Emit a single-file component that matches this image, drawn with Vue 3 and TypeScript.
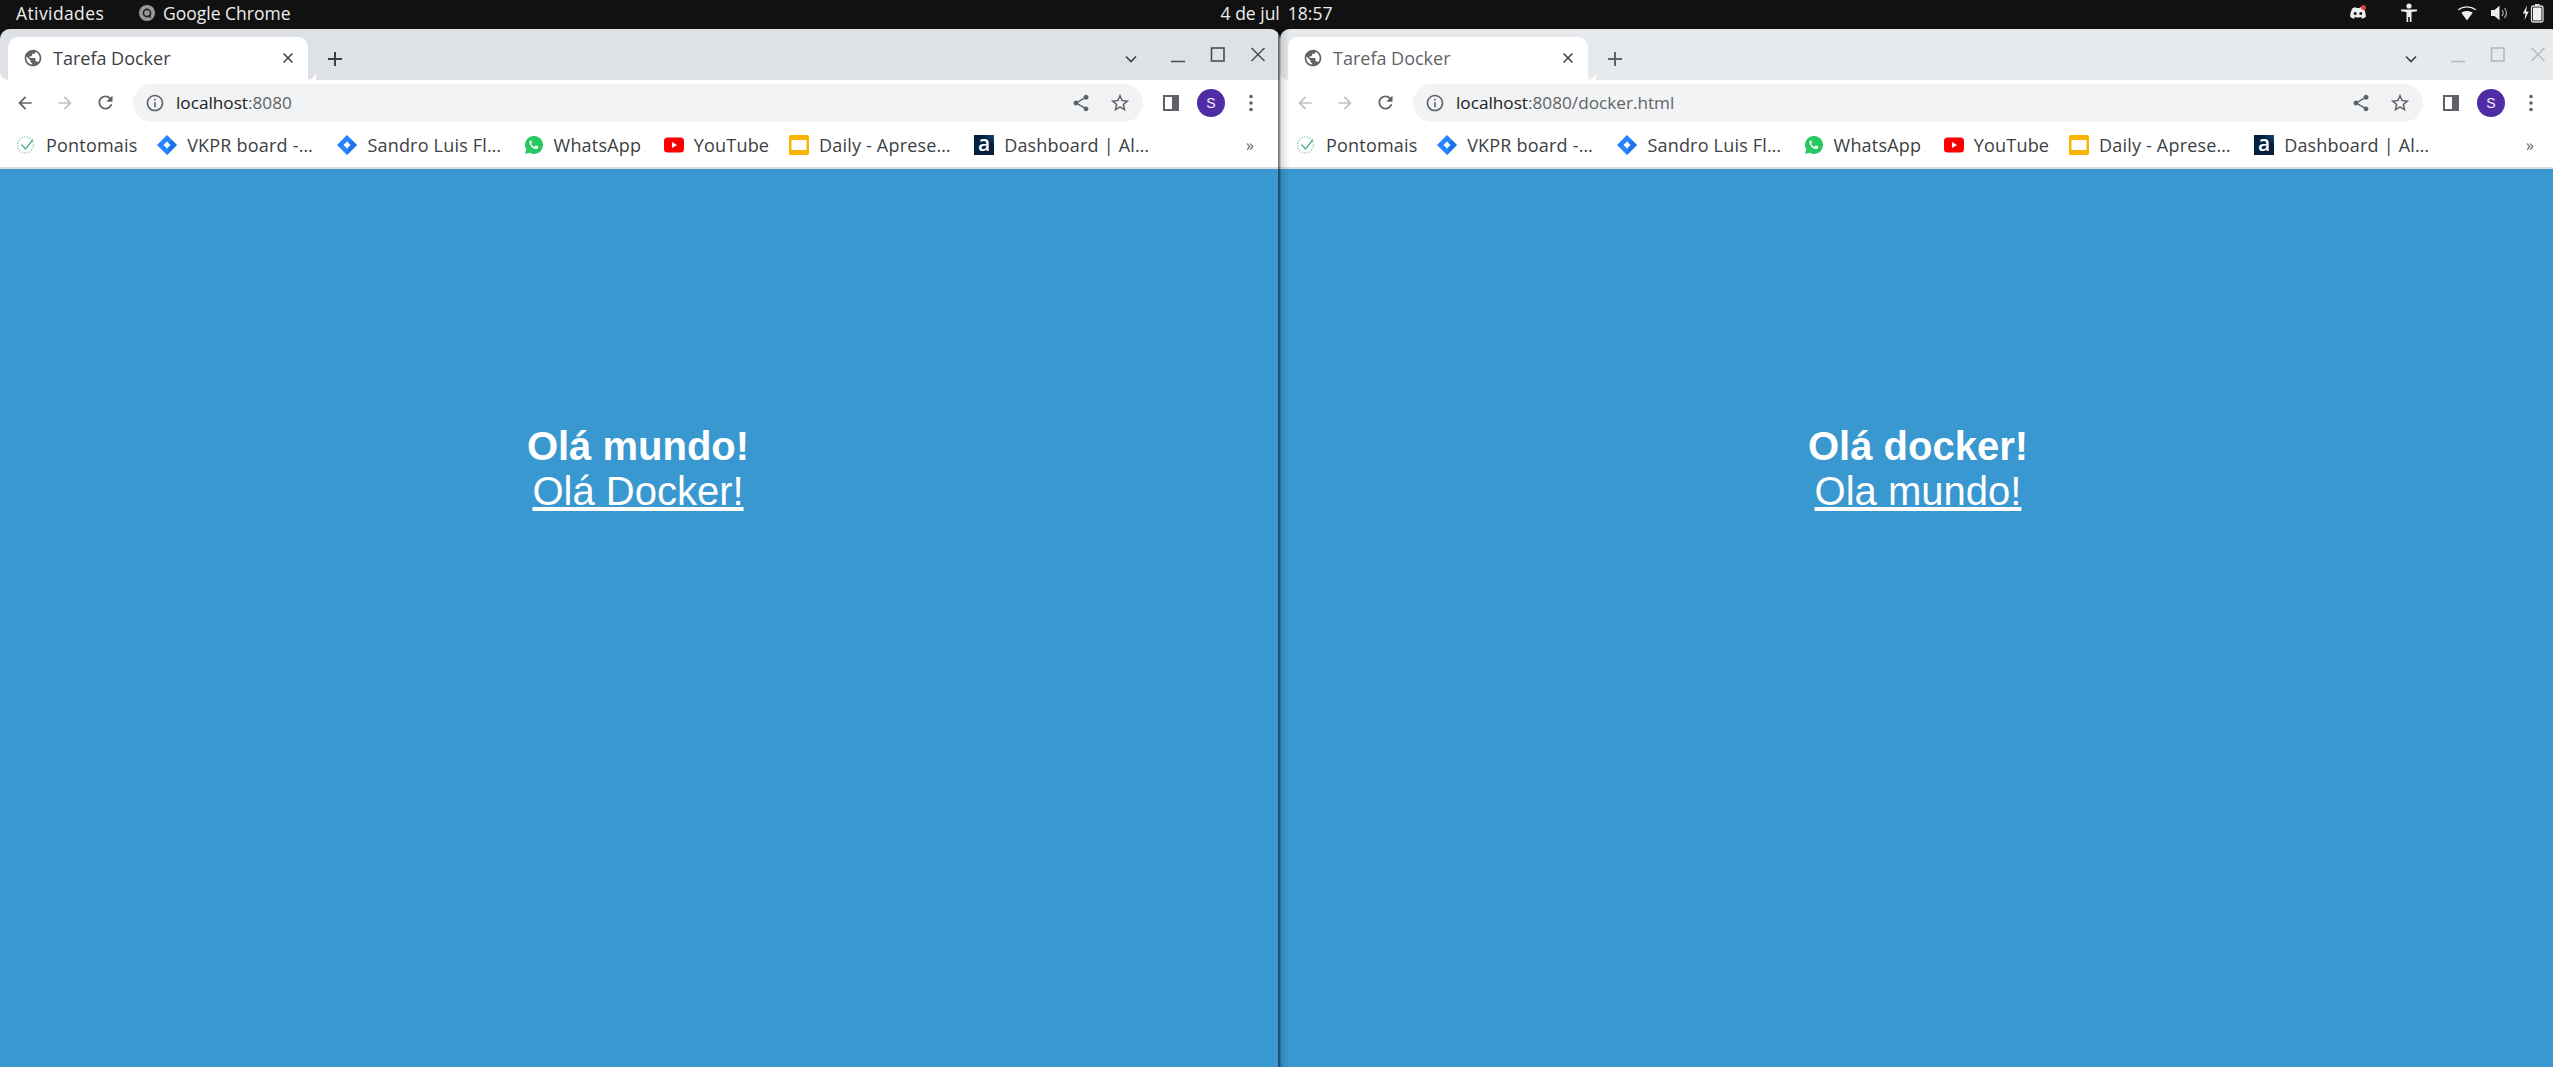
<script setup lang="ts">
interface Bookmark { id: string; label: string; width: number }
interface Win {
  id: string; focused: boolean; host: string; path: string;
  heading: string; link: string;
}
const bookmarks: Bookmark[] = [
  { id: 'ponto', label: 'Pontomais', width: 90 },
  { id: 'jira', label: 'VKPR board -…', width: 129 },
  { id: 'jira', label: 'Sandro Luis Fl…', width: 135 },
  { id: 'whats', label: 'WhatsApp', width: 89 },
  { id: 'yt', label: 'YouTube', width: 74 },
  { id: 'daily', label: 'Daily - Aprese…', width: 134 },
  { id: 'alura', label: 'Dashboard | Al…', width: 141 },
];
const windows: Win[] = [
  { id: 'a', focused: true, host: 'localhost', path: ':8080', heading: 'Olá mundo!', link: 'Olá Docker!' },
  { id: 'b', focused: false, host: 'localhost', path: ':8080/docker.html', heading: 'Olá docker!', link: 'Ola mundo!' },
];
</script>

<template>
  <div class="screen">
    <header class="topbar">
      <div class="top-left">
        <span class="top-text activities">Atividades</span>
        <svg class="chrome-mark" viewBox="0 0 16 16" width="16" height="16">
          <circle cx="8" cy="8" r="8" fill="#9a9a9a" />
          <circle cx="8" cy="8" r="3.6" fill="none" stroke="#222" stroke-width="1.6" />
          <path d="M11 9v4" stroke="#222" stroke-width="1.4" />
        </svg>
        <span class="top-text">Google Chrome</span>
      </div>
      <div class="top-text clock"><span>4 de jul</span><span>18:57</span></div>
      <div class="tray">
        <svg class="tray-discord" viewBox="0 0 20 16" width="20" height="16">
          <path fill="#eee" d="M4.500 3.200C6 2.500 7.400 2.300 8 2.300l.4.8h3.200l.4-.8c.6 0 2 .2 3.500.9 1.600 2.600 2.400 5.500 2.300 8.800-1.200.9-2.600 1.500-3.800 1.700l-.9-1.400c.6-.2 1.100-.5 1.500-.8-2.900 1.300-6.300 1.300-9.200 0 .4.3.9.6 1.500.8l-.9 1.400C4.800 13.500 3.400 12.900 2.200 12c-.1-3.300.7-6.200 2.300-8.800z" />
          <circle cx="7.200" cy="8.500" r="1.500" fill="#111" />
          <circle cx="12.800" cy="8.500" r="1.500" fill="#111" />
          <circle cx="15.500" cy="2.500" r="2.500" fill="#e8403a" />
        </svg>
        <svg class="tray-access" viewBox="0 0 18 20" width="18" height="20">
          <circle cx="9" cy="3" r="2.600" fill="#eee" />
          <path fill="#eee" d="M1 6.500h16v1.800l-5.500.8V19H9.800v-5H8.200v5H6.500V9.100L1 8.300z" />
        </svg>
        <svg class="tray-wifi" viewBox="0 0 20 16" width="20" height="16">
          <path fill="#eee" d="M10 15.500 4.300 7.800C7.600 5.500 12.400 5.500 15.700 7.800z" />
          <path fill="none" stroke="#eee" stroke-width="1.300" d="M1.200 4.700C6.300.9 13.700.9 18.800 4.700" />
        </svg>
        <svg class="tray-vol" viewBox="0 0 18 16" width="18" height="16">
          <path fill="#eee" d="M1 5h3.500L9.500 .8v14.400L4.500 11H1z" />
          <path fill="none" stroke="#aaa" stroke-width="1.200" d="M12 5c1.300 1.700 1.300 4.300 0 6M14.500 3c2.300 3 2.300 7 0 10" />
        </svg>
        <svg class="tray-bat" viewBox="0 0 22 20" width="22" height="20">
          <path fill="#eee" d="M5 2.500 .8 10.500h2.700L2.500 17l4.300-8.500H4.100z" />
          <rect x="9.500" y="3" width="11.500" height="16" rx="2" fill="none" stroke="#ddd" stroke-width="1.300" />
          <rect x="13" y="1" width="4.500" height="2" fill="#ddd" />
          <rect x="11" y="4.500" width="8.500" height="13" rx=".8" fill="#eee" />
        </svg>
      </div>
    </header>

    <main class="desktop">
      <div v-for="w in windows" :key="w.id" class="slot" :class="{ front: w.focused }">
        <section class="window" :class="w.focused ? 'focused' : 'blurred'">
          <div class="tabstrip">
            <div class="tab">
              <svg class="globe" viewBox="0 0 24 24" width="20" height="20">
                <path fill="#5f6368" d="M12 2C6.480 2 2 6.480 2 12s4.480 10 10 10 10-4.480 10-10S17.520 2 12 2zm-1 17.930c-3.950-.490-7-3.850-7-7.930 0-.620.080-1.210.210-1.790L9 15v1c0 1.100.900 2 2 2v1.930zm6.900-2.540c-.260-.810-1-1.390-1.900-1.390h-1v-3c0-.550-.450-1-1-1H8v-2h2c.550 0 1-.450 1-1V7h2c1.100 0 2-.900 2-2v-.410c2.930 1.190 5 4.060 5 7.410 0 2.080-.800 3.970-2.100 5.390z" />
              </svg>
              <span class="tab-title">Tarefa Docker</span>
              <svg class="tab-close" viewBox="0 0 12 12" width="12" height="12">
                <path d="M1.500 1.500l9 9M10.500 1.500l-9 9" stroke="#3c4043" stroke-width="1.500" fill="none" />
              </svg>
            </div>
            <svg class="new-tab" viewBox="0 0 14 14" width="14" height="14">
              <path class="strip-ink" d="M7 0v14M0 7h14" stroke-width="2" fill="none" />
            </svg>
            <svg class="tab-search" viewBox="0 0 12 8" width="12" height="8">
              <path d="M1 1.500l5 5 5-5" stroke="#3c4043" stroke-width="1.600" fill="none" />
            </svg>
            <div class="win-ctrl">
              <svg viewBox="0 0 16 16" width="16" height="16">
                <path class="ctrl-ink" d="M1 14.500h14" stroke-width="1.500" fill="none" />
              </svg>
              <svg viewBox="0 0 16 16" width="16" height="16">
                <rect class="ctrl-ink" x="1.500" y="1" width="12.500" height="13" stroke-width="1.600" fill="none" />
              </svg>
              <svg viewBox="0 0 16 16" width="16" height="16">
                <path class="ctrl-ink" d="M1.500 1l13 13M14.500 1l-13 13" stroke-width="1.500" fill="none" />
              </svg>
            </div>
          </div>

          <div class="toolbar">
            <button class="tool" type="button">
              <svg viewBox="0 0 24 24" width="20" height="20">
                <path class="back-ink" d="M20 11H7.830l5.590-5.590L12 4l-8 8 8 8 1.410-1.410L7.830 13H20v-2z" />
              </svg>
            </button>
            <button class="tool" type="button">
              <svg viewBox="0 0 24 24" width="20" height="20">
                <path fill="#bdc1c6" d="M4 11h12.170l-5.590-5.590L12 4l8 8-8 8-1.410-1.410L16.170 13H4v-2z" />
              </svg>
            </button>
            <button class="tool" type="button">
              <svg viewBox="0 0 24 24" width="21" height="21">
                <path fill="#5f6368" d="M17.650 6.350C16.200 4.900 14.210 4 12 4c-4.420 0-7.990 3.580-7.990 8s3.570 8 7.990 8c3.730 0 6.840-2.550 7.730-6h-2.080c-.820 2.330-3.040 4-5.650 4-3.310 0-6-2.690-6-6s2.690-6 6-6c1.660 0 3.140.690 4.220 1.780L13 11h7V4l-2.350 2.350z" />
              </svg>
            </button>
            <div class="omnibox">
              <svg class="info" viewBox="0 0 24 24" width="20" height="20">
                <path fill="#5f6368" d="M11 7h2v2h-2zm0 4h2v6h-2zm1-9C6.480 2 2 6.480 2 12s4.480 10 10 10 10-4.480 10-10S17.520 2 12 2zm0 18c-4.410 0-8-3.590-8-8s3.590-8 8-8 8 3.590 8 8-3.590 8-8 8z" />
              </svg>
              <span class="url"><span class="host">{{ w.host }}</span><span class="path">{{ w.path }}</span></span>
              <svg class="omni-icon share" viewBox="0 0 24 24" width="20" height="20">
                <path fill="#5f6368" d="M18 16.080c-.760 0-1.440.300-1.960.770L8.910 12.700c.050-.230.090-.460.090-.700s-.040-.470-.090-.700l7.050-4.110c.540.500 1.250.810 2.040.810 1.660 0 3-1.340 3-3s-1.340-3-3-3-3 1.340-3 3c0 .240.040.470.090.700L8.040 9.810C7.500 9.310 6.790 9 6 9c-1.660 0-3 1.340-3 3s1.340 3 3 3c.790 0 1.500-.310 2.040-.810l7.120 4.160c-.050.210-.080.430-.080.650 0 1.610 1.310 2.920 2.920 2.920s2.920-1.310 2.920-2.920-1.310-2.920-2.920-2.920z" />
              </svg>
              <svg class="omni-icon" viewBox="0 0 24 24" width="22" height="22">
                <path fill="#5f6368" d="M22 9.240l-7.190-.620L12 2 9.190 8.630 2 9.240l5.460 4.730L5.820 21 12 17.270 18.180 21l-1.630-7.030L22 9.240zM12 15.400l-3.760 2.270 1-4.280-3.320-2.880 4.380-.380L12 6.100l1.710 4.040 4.380.380-3.320 2.880 1 4.280L12 15.400z" />
              </svg>
            </div>
            <div class="tools-right">
              <button class="tool" type="button">
                <svg viewBox="0 0 18 18" width="18" height="18">
                  <rect x="1" y="1" width="16" height="16" fill="#5f6368" />
                  <rect x="3" y="3" width="7" height="12" fill="#fff" />
                </svg>
              </button>
              <button class="tool" type="button">
                <span class="avatar">S</span>
              </button>
              <button class="tool" type="button">
                <svg viewBox="0 0 4 18" width="4" height="18">
                  <circle cx="2" cy="2.500" r="1.800" fill="#5f6368" />
                  <circle cx="2" cy="9" r="1.800" fill="#5f6368" />
                  <circle cx="2" cy="15.500" r="1.800" fill="#5f6368" />
                </svg>
              </button>
            </div>
          </div>

          <nav class="bookmarks">
            <a v-for="b in bookmarks" :key="b.label" class="mark">
              <svg v-if="b.id === 'ponto'" viewBox="0 0 20 20" width="20" height="20">
                <circle cx="9.500" cy="10" r="8" fill="none" stroke="#6fb9a0" stroke-width="1.200" stroke-dasharray="1 1.600" />
                <path d="M5.500 9.500l4 4.500L17 4.500" fill="none" stroke="#5fbf94" stroke-width="1.600" />
              </svg>
              <svg v-else-if="b.id === 'jira'" viewBox="0 0 20 20" width="20" height="20">
                <path fill="#2684ff" d="M10 0l10 10-10 10L0 10z" />
                <path fill="#1565d8" d="M10 20l10-10-5-5-5 5 2.500 2.500z" opacity=".55" />
                <path fill="#fff" d="M10 6.500l3.500 3.500-3.500 3.500L6.500 10z" />
              </svg>
              <svg v-else-if="b.id === 'whats'" viewBox="0 0 20 20" width="20" height="20">
                <path fill="#25c95f" d="M10 1a9 9 0 0 0-7.700 13.600L1 19l4.500-1.200A9 9 0 1 0 10 1z" />
                <path fill="#fff" d="M7.200 5.300c-.4 0-1 .2-1.400.9-.6 1-.5 2.300.4 3.800 1.200 2 2.800 3.300 4.800 3.900 1.300.4 2.400 0 3-.8.300-.5.400-1.100.300-1.500l-2.200-1.100c-.2-.1-.4 0-.5.100l-.8 1c-.2.200-.3.200-.5.100-1.400-.6-2.400-1.500-3.100-2.800-.1-.2-.1-.300.1-.5l.6-.8c.1-.1.100-.3 0-.5l-.9-2c-.1-.2-.3-.2-.8-.2z" />
              </svg>
              <svg v-else-if="b.id === 'yt'" viewBox="0 0 20 20" width="20" height="20">
                <rect x="0" y="2.500" width="20" height="15" rx="3.500" fill="#f00" />
                <path fill="#fff" d="M8 7l5 3-5 3z" />
              </svg>
              <svg v-else-if="b.id === 'daily'" viewBox="0 0 20 20" width="20" height="20">
                <rect x="0" y="0" width="20" height="20" rx="1.500" fill="#f9b400" />
                <rect x="2.500" y="5" width="15" height="10" fill="#fff" />
              </svg>
              <span v-else class="alura">a</span>
              <span class="mark-text" :style="{ width: b.width + 'px' }">{{ b.label }}</span>
            </a>
            <span class="more">»</span>
          </nav>

          <article class="page">
            <strong class="heading">{{ w.heading }}</strong>
            <a class="page-link" href="#">{{ w.link }}</a>
          </article>
        </section>
      </div>
    </main>
  </div>
</template>

<style scoped>
.screen {
  width: 2553px;
  height: 1067px;
  overflow: hidden;
  background: #111;
  display: flex;
  flex-direction: column;
  font-family: "Open Sans", "Noto Sans", sans-serif;
}
.topbar {
  height: 29px;
  flex: none;
  box-sizing: border-box;
  padding-bottom: 3px;
  display: grid;
  grid-template-columns: 1fr auto 1fr;
  align-items: center;
  background: #111;
  color: #eee;
}
.top-left { display: flex; align-items: center; padding-left: 16px; }
.top-text { font-size: 17.5px; color: #eee; white-space: nowrap; }
.activities { width: 123px; flex: none; letter-spacing: .4px; }
.chrome-mark { margin-right: 8px; }
.clock { display: flex; gap: 8px; }
.tray {
  display: flex;
  justify-content: flex-end;
  align-items: center;
  padding-right: 9px;
}
.tray-access { margin-left: 32px; }
.tray-wifi { margin-left: 39px; }
.tray-vol { margin-left: 13px; }
.tray-bat { margin-left: 14px; }

.desktop {
  flex: 1;
  display: grid;
  grid-template-columns: 1280px 1fr;
  min-height: 0;
}
.slot { position: relative; min-width: 0; }
.slot.front { z-index: 2; }
.slot.front::after {
  content: "";
  position: absolute;
  top: 0;
  bottom: 0;
  left: 1278px;
  width: 12px;
  background: linear-gradient(90deg, rgba(0, 0, 0, .55) 0, rgba(0, 0, 0, .4) 2px, rgba(0, 0, 0, .12) 3px, rgba(0, 0, 0, 0) 100%);
  pointer-events: none;
}
.window {
  width: 1280px;
  height: 100%;
  display: flex;
  flex-direction: column;
  border-radius: 10px 10px 0 0;
  overflow: hidden;
  background: #3998cf;
}

.tabstrip {
  height: 51px;
  flex: none;
  display: flex;
  align-items: flex-end;
  padding-left: 8px;
  position: relative;
}
.focused .tabstrip { background: #dee1e6; }
.blurred .tabstrip { background: #e7eaed; }
.tab {
  width: 300px;
  height: 43px;
  background: #fff;
  border-radius: 10px 10px 0 0;
  display: flex;
  align-items: center;
  padding: 0 13px 2px 15px;
  box-sizing: border-box;
  position: relative;
}
.tab::before, .tab::after {
  content: "";
  position: absolute;
  bottom: 0;
  width: 8px;
  height: 8px;
  background: radial-gradient(circle at 0 0, transparent 7.500px, #fff 8px);
}
.tab::after { right: -8px; }
.tab::before {
  left: -8px;
  background: radial-gradient(circle at 100% 0, transparent 7.500px, #fff 8px);
}
.globe { flex: none; }
.tab-title {
  margin-left: 10px;
  font-size: 18px;
  flex: 1;
  white-space: nowrap;
}
.focused .tab-title { color: #3c4043; }
.blurred .tab-title { color: #5f6368; }
.tab-close { flex: none; margin-right: 1px; }
.new-tab { margin: 0 0 14px 20px; flex: none; }
.strip-ink { stroke: #3c4043; }
.blurred .strip-ink { stroke: #5f6368; }
.tab-search { margin: 0 0 17px 783px; flex: none; }
.win-ctrl {
  margin-left: auto;
  display: flex;
  gap: 24px;
  padding: 0 14px 17px 0;
}
.ctrl-ink { stroke: #4a4d52; }
.blurred .ctrl-ink { stroke: #b6babf; }

.toolbar {
  height: 45px;
  flex: none;
  background: #fff;
  display: flex;
  align-items: center;
  padding: 0 9px 0 5px;
  box-sizing: border-box;
}
.tool {
  width: 40px;
  height: 40px;
  padding: 0;
  border: 0;
  background: none;
  display: flex;
  align-items: center;
  justify-content: center;
  flex: none;
}
.back-ink { fill: #5f6368; }
.blurred .back-ink { fill: #bdc1c6; }
.omnibox {
  flex: 1;
  height: 38px;
  margin: 0 8px;
  border-radius: 19px;
  background: #f1f3f4;
  display: flex;
  align-items: center;
  padding: 0 12px 0 12px;
  min-width: 0;
}
.info { flex: none; }
.url { margin-left: 11px; flex: 1; font-size: 17.2px; white-space: nowrap; }
.host { color: #202124; }
.path { color: #5f6368; }
.omni-icon { flex: none; margin-left: 18px; }
.tools-right { display: flex; }
.avatar {
  width: 28px;
  height: 28px;
  border-radius: 50%;
  background: #4f2ca3;
  color: #f4f0ff;
  font-size: 14px;
  line-height: 28px;
  text-align: center;
}

.bookmarks {
  height: 44px;
  flex: none;
  background: #fff;
  border-bottom: 2px solid #dadce0;
  box-sizing: border-box;
  display: flex;
  align-items: center;
  padding: 0 26px 2px 16px;
  gap: 21.2px;
}
.mark { display: flex; align-items: center; gap: 10px; flex: none; }
.mark svg { flex: none; }
.mark-text {
  font-size: 18px;
  letter-spacing: .2px;
  color: #3c4043;
  white-space: nowrap;
  display: block;
}
.alura {
  width: 20px;
  height: 20px;
  background: linear-gradient(45deg, #051f3f 70%, #0f4c8a);
  color: #fff;
  font: 600 21px/17px "Open Sans", sans-serif;
  text-align: center;
}
.more { margin-left: auto; color: #5f6368; font-size: 16px; }

.page {
  flex: 1;
  background: #3998cf;
  color: #fff;
  padding: 255px 4px 0 0;
  display: flex;
  flex-direction: column;
  align-items: center;
  font-family: "Liberation Sans", Arial, sans-serif;
  font-size: 40px;
}
.heading { font-weight: 700; }
.page-link { color: #fff; text-decoration: underline; }
</style>
<style>
html, body { margin: 0; background: #111; overflow: hidden; }
</style>
